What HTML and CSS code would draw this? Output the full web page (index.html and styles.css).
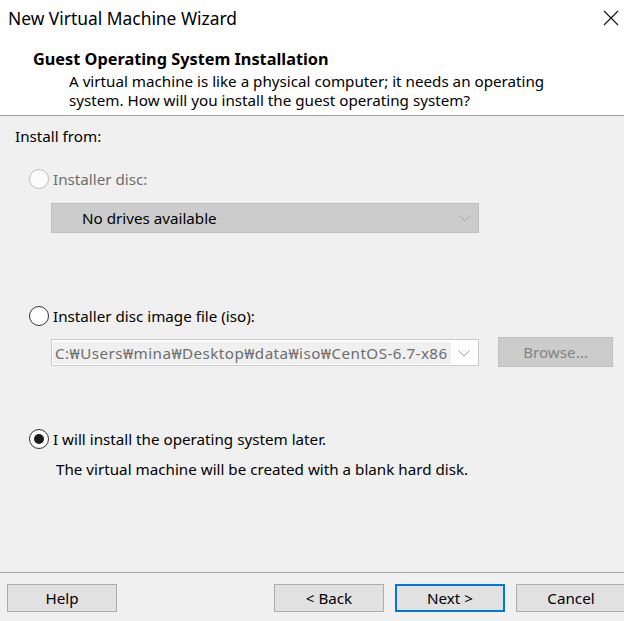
FILE: index.html
```html
<!DOCTYPE html>
<html lang="en">
<head>
<meta charset="utf-8">
<title>New Virtual Machine Wizard</title>
<link rel="stylesheet" href="styles.css">
</head>
<body>
<div class="window">
  <div class="top">
    <div class="titlebar">
      <span class="title">New Virtual Machine Wizard</span>
      <svg class="close" width="16" height="16" viewBox="0 0 16 16"><path d="M1 1 L15 15 M15 1 L1 15" stroke="#111" stroke-width="1.1" fill="none"/></svg>
    </div>
    <div class="header">
      <div class="h-title">Guest Operating System Installation</div>
      <div class="h-desc">A virtual machine is like a physical computer; it needs an operating<br>system. How will you install the guest operating system?</div>
    </div>
  </div>

  <div class="main">
    <div class="label">Install from:</div>

    <div class="radio-row row-disc disabled">
      <span class="radio"></span><span class="radio-text">Installer disc:</span>
    </div>
    <div class="combo combo-disabled">
      <span class="combo-text">No drives available</span>
      <svg class="chev" width="12" height="7" viewBox="0 0 12 7"><path d="M0.5 0.5 L6 6 L11.5 0.5" stroke="#a8a8a8" stroke-width="1" fill="none"/></svg>
    </div>

    <div class="radio-row row-iso">
      <span class="radio"></span><span class="radio-text">Installer disc image file (iso):</span>
    </div>
    <div class="file-row">
      <div class="combo combo-file">
        <span class="file-text">C:₩Users₩mina₩Desktop₩data₩iso₩CentOS-6.7-x86</span>
        <svg class="chev" width="12" height="7" viewBox="0 0 12 7"><path d="M0.5 0.5 L6 6 L11.5 0.5" stroke="#a0a0a0" stroke-width="1" fill="none"/></svg>
      </div>
      <button class="btn btn-disabled">Browse...</button>
    </div>

    <div class="radio-row row-later">
      <span class="radio checked"></span><span class="radio-text">I will install the operating system later.</span>
    </div>
    <div class="note">The virtual machine will be created with a blank hard disk.</div>
  </div>

  <div class="footer">
    <button class="btn btn-help">Help</button>
    <div class="nav">
      <button class="btn">&lt; Back</button>
      <button class="btn btn-default">Next &gt;</button>
      <button class="btn btn-cancel">Cancel</button>
    </div>
  </div>
</div>
</body>
</html>
```

FILE: styles.css
```css
* { box-sizing: border-box; }
html, body { margin: 0; padding: 0; }
body {
  width: 624px;
  height: 621px;
  overflow: hidden;
  background: #f0f0f0;
  font-family: "Noto Sans", "Open Sans", sans-serif;
  font-size: 15.2px;
  line-height: 19px;
  color: #000;
}
.window {
  width: 624px;
  height: 621px;
  display: flex;
  flex-direction: column;
  overflow: hidden;
}
.top {
  background: #fff;
  height: 116px;
  border-bottom: 1px solid #a0a0a0;
  flex: none;
}
.titlebar {
  display: flex;
  justify-content: space-between;
  align-items: flex-start;
  padding: 8px 5px 0 8px;
  height: 50px;
}
.title {
  font-size: 17.4px;
  line-height: 20px;
  color: #000;
}
.close { margin-top: 2px; }
.header { padding-left: 33px; }
.h-title {
  font-weight: bold;
  font-size: 16.3px;
  line-height: 19px;
}
.h-desc {
  margin-top: 3px;
  padding-left: 36px;
  line-height: 19px;
}

.main {
  flex: 1;
  padding: 11px 0 0 0;
}
.label { padding-left: 15px; }

.radio-row {
  display: flex;
  align-items: center;
  padding-left: 29px;
  height: 20px;
}
.radio {
  width: 20px;
  height: 20px;
  border: 1px solid #333;
  border-radius: 50%;
  background: #fff;
  margin-right: 4px;
  display: flex;
  align-items: center;
  justify-content: center;
  flex: none;
}
.radio.checked::after {
  content: "";
  width: 10px;
  height: 10px;
  border-radius: 50%;
  background: #1b1b1b;
}
.disabled .radio { border-color: #bcbcbc; background: #fcfcfc; }
.disabled .radio-text { color: #6d6d6d; }

.row-disc { margin-top: 23px; }
.row-iso { margin-top: 73px; }
.row-later { margin-top: 62px; }

.combo {
  position: relative;
  display: flex;
  align-items: center;
  margin-left: 51px;
  width: 428px;
}
.combo-disabled {
  margin-top: 14px;
  height: 30px;
  background: #cccccc;
  border: 1px solid #bfbfbf;
  padding-left: 30px;
}
.combo-text { flex: 1; }
.chev { position: absolute; right: 7px; top: 50%; margin-top: -3px; }

.file-row {
  margin-top: 11px;
  display: flex;
  align-items: center;
  height: 30px;
}
.combo-file {
  height: 27px;
  background: #fff;
  border: 1px solid #cccccc;
  padding: 1px 0 0 1px;
}
.file-text {
  display: block;
  width: 398px;
  height: 22px;
  line-height: 22px;
  background: #f0f0f0;
  color: #6d6d6d;
  white-space: nowrap;
  overflow: hidden;
  padding-left: 2px;
  letter-spacing: 0.45px;
}
.combo-file .chev { right: 8px; margin-top: -2px; }

.btn {
  font-family: inherit;
  font-size: 15.2px;
  height: 28px;
  width: 110px;
  background: #e1e1e1;
  border: 1px solid #adadad;
  color: #000;
  padding: 0;
  margin: 0;
}
.btn-disabled {
  margin-left: 19px;
  width: 115px;
  height: 30px;
  background: #cccccc;
  border-color: #bfbfbf;
  color: #838383;
}
.btn-default { border: 2px solid #0078d7; }

.note {
  margin-top: 11px;
  padding-left: 56px;
}

.footer {
  flex: none;
  height: 49px;
  border-top: 1px solid #a0a0a0;
  display: flex;
  align-items: flex-start;
  padding: 11px 0 0 7px;
}
.nav {
  margin-left: auto;
  display: flex;
  gap: 11px;
  margin-right: -2px;
}
```
